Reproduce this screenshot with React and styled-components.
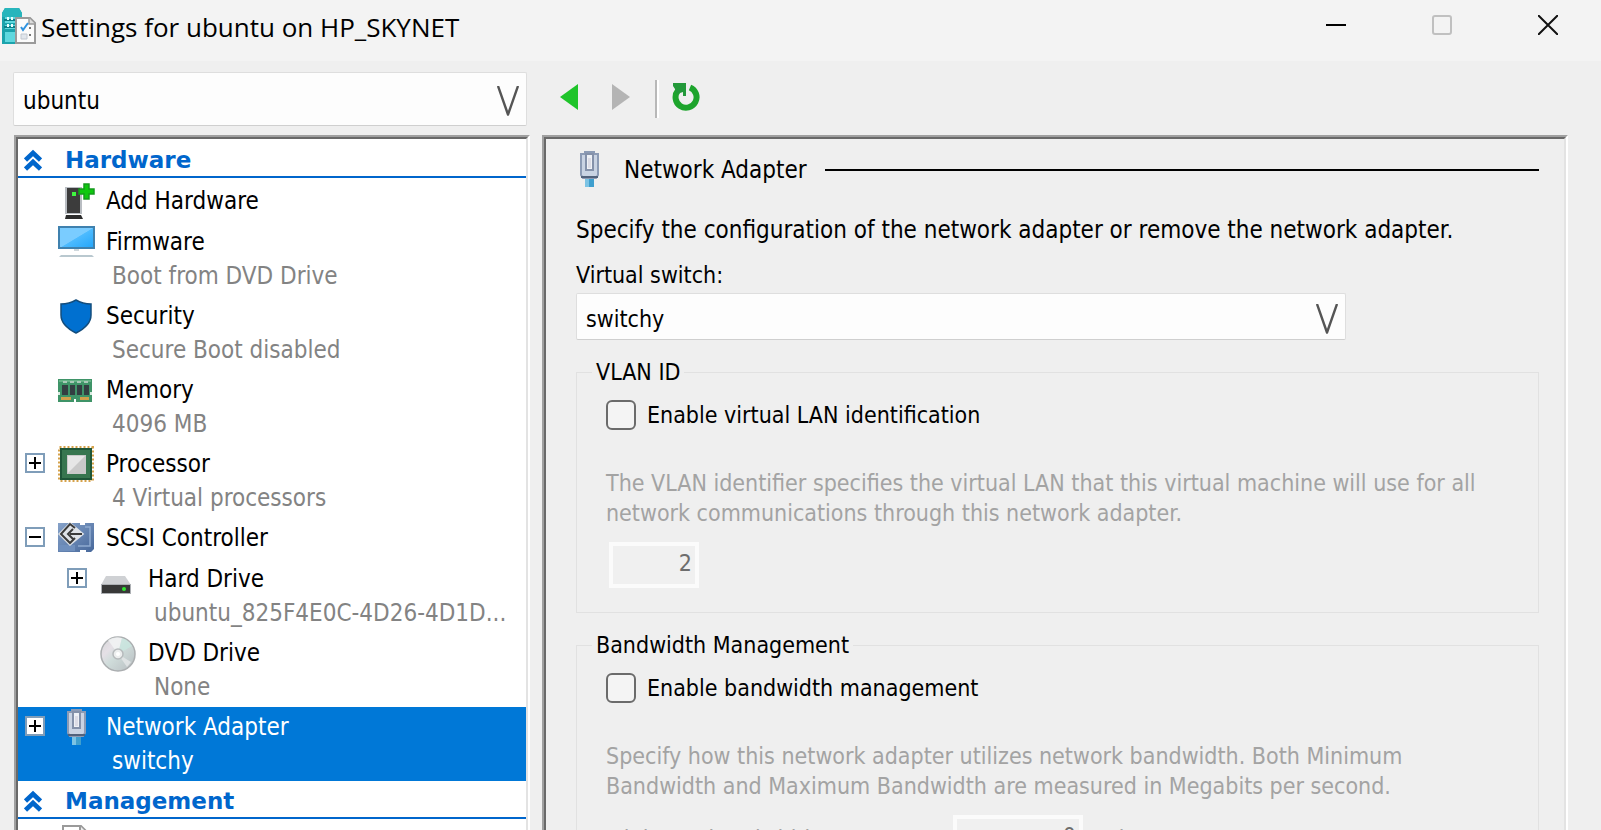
import React from "react";
import styled, { createGlobalStyle } from "styled-components";

const GlobalStyle = createGlobalStyle`
  *, *::before, *::after { box-sizing: border-box; }
  body { margin: 0; background: #efefef; }
  button, input, select { font: inherit; color: inherit; margin: 0; }
`;

const Window = styled.div`
  height: 100vh;
  display: flex;
  flex-direction: column;
  overflow: hidden;
  background: #efefef;
  color: #000;
  font: 24px/30px "DejaVu Sans Condensed", Tahoma, "Noto Sans", sans-serif;
`;

const TitleBar = styled.header`
  flex: none;
  display: flex;
  align-items: flex-start;
  height: 61px;
  background: #f3f3f3;
`;

const TitleIcon = styled.svg`
  flex: none;
  width: 36px;
  height: 38px;
  margin: 7px 4px 0 1px;
`;

const Title = styled.h1`
  flex: 1;
  margin: 0;
  padding-top: 7px;
  font: 400 26px/40px "Open Sans", "Segoe UI", sans-serif;
  white-space: nowrap;
`;

const CaptionButton = styled.button`
  display: flex;
  align-items: center;
  justify-content: center;
  width: 106px;
  height: 50px;
  padding: 0;
  border: 0;
  background: none;
`;

const ToolBar = styled.div`
  flex: none;
  display: flex;
  align-items: flex-start;
  padding: 11px 13px 9px;
`;

const SelectBox = styled.div`
  position: relative;
  width: ${(p) => p.$width};
  height: ${(p) => p.$height};
  font-size: ${(p) => p.$size};

  select {
    width: 100%;
    height: 100%;
    padding: 4px 40px 0 9px;
    border: 1px solid #dedede;
    border-bottom-color: #cfcfcf;
    border-radius: 2px;
    background: #fdfdfd;
    appearance: none;
  }

  svg {
    position: absolute;
    right: 8px;
    top: 50%;
    margin-top: -13px;
    pointer-events: none;
  }
`;

const ToolGroup = styled.div`
  display: flex;
  align-items: center;
  height: 50px;
  padding-left: 16px;
`;

const ToolButton = styled.button`
  display: flex;
  justify-content: center;
  align-items: center;
  width: ${(p) => p.$width || "52px"};
  height: 36px;
  padding: 0;
  border: 0;
  background: none;
`;

const Separator = styled.div`
  width: 4px;
  height: 38px;
  margin: 4px 13px 0 8px;
  border-left: 2px solid #b8b8b8;
  border-right: 2px solid #fff;
`;

const Body = styled.main`
  flex: 1;
  min-height: 0;
  display: flex;
  gap: 12px;
  padding: 0 33px 0 14px;
`;

const Sunken = styled.section`
  min-width: 0;
  overflow: hidden;
  border: solid;
  border-width: 2px 2px 0 2px;
  border-color: #a0a0a0 #fff #a0a0a0 #a0a0a0;
  background: ${(p) => p.$bg};
`;

const SunkenInner = styled.div`
  min-height: 100%;
  padding-top: 1px;
  border: solid;
  border-width: 2px 2px 0 2px;
  border-color: #696969 #e3e3e3 #696969 #696969;
`;

const Sidebar = styled(Sunken)`
  flex: 0 0 516px;
`;

const Detail = styled(Sunken)`
  flex: 1;
`;

const GroupHeader = styled.h2`
  display: flex;
  align-items: center;
  height: 38px;
  margin: 0 0 3px;
  padding: 4px 0 0 6px;
  border-bottom: 2px solid #0066cc;
  color: #0066cc;
  font: 700 23px/32px "DejaVu Sans", Verdana, sans-serif;

  svg { margin-right: 23px; }
`;

const Tree = styled.ul`
  list-style: none;
  margin: 0;
  padding: 0;
`;

const Node = styled.li`
  display: flex;
  align-items: flex-start;
  height: ${(p) => (p.$tall ? "74px" : "41px")};
  padding-left: ${(p) => (p.$child ? "49px" : "7px")};
  background: ${(p) => (p.$selected ? "#0078d7" : "transparent")};
  color: ${(p) => (p.$selected ? "#fff" : "#000")};
`;

const ExpanderSlot = styled.div`
  flex: none;
  width: 33px;
  padding-top: 9px;
`;

const Expander = styled.button`
  display: block;
  width: 20px;
  height: 20px;
  padding: 0;
  border: 2px solid #7f9db9;
  background: #fff;

  svg { display: block; }
`;

const NodeIcon = styled.div`
  flex: none;
  width: 48px;
  height: 40px;
  padding-top: 2px;
`;

const NodeText = styled.div`
  min-width: 0;
  padding-top: 5px;
`;

const NodeDetail = styled.div`
  margin-top: 4px;
  padding-left: 6px;
  color: ${(p) => (p.$selected ? "#fff" : "#838383")};
  white-space: nowrap;
`;

const DetailContent = styled.div`
  padding: 11px 25px 0 30px;
`;

const DetailHeading = styled.h2`
  display: flex;
  align-items: center;
  margin: 0 0 27px;
  font-size: 24px;
  font-weight: 400;

  svg { margin: 0 25px 0 4px; }

  &::after {
    content: "";
    flex: 1;
    height: 2px;
    margin-left: 18px;
    background: #000;
  }
`;

const Paragraph = styled.p`
  margin: 0 0 15px;
`;

const FieldLabel = styled.label`
  display: block;
  margin-bottom: 3px;
  font-size: 23px;
`;

const GroupBox = styled.fieldset`
  min-width: 0;
  margin: 17px 0 0;
  padding: 13px 30px 24px 29px;
  border: 1px solid #e1e1e1;
  font-size: 23px;

  legend {
    margin-left: -14px;
    padding: 0 4px;
  }
`;

const CheckLabel = styled.label`
  display: flex;
  align-items: center;
  gap: 11px;
  width: fit-content;

  input {
    width: 30px;
    height: 30px;
    border: 2px solid #6b6b6b;
    border-radius: 6px;
    background: #f4f4f4;
    appearance: none;
  }
`;

const Hint = styled.p`
  margin: 38px 0 14px;
  color: #a3a3a3;
`;

const NumberInput = styled.input`
  width: ${(p) => p.$width};
  height: 46px;
  margin-left: 3px;
  padding: 0 3px 4px;
  border: 4px solid #fbfbfb;
  background: #f0f0f0;
  color: #6d6d6d;
  text-align: right;

  &:disabled { opacity: 1; }
`;

const LimitRow = styled.div`
  display: flex;
  align-items: center;
  gap: 18px;
  color: #a3a3a3;

  label { width: 326px; padding-top: 2px; }
  span { padding-top: 2px; }
`;

const Chevron = () => (
  <svg width="22" height="31" viewBox="0 0 22 31" fill="none" stroke="#555" strokeWidth="2.4">
    <path d="M1 0L11 28.500L21 0" strokeLinejoin="round" />
  </svg>
);

const DoubleUp = () => (
  <svg width="18" height="22" viewBox="0 0 18 22" fill="none" stroke="#0066cc" strokeWidth="4.600">
    <path d="M1.500 11L9 4L16.500 11M1.500 20L9 13L16.500 20" />
  </svg>
);

const SettingsIcon = () => (
  <TitleIcon viewBox="0 0 36 38">
    <path d="M1 6L4 1H18L21 6V37H1Z" fill="#1ba3ac" />
    <path d="M1 6L4 1H18L21 6V10H1Z" fill="#27b5bc" />
    <path d="M4 10H20V16H4ZM4 18H20V22H4ZM4 25H20V35H4Z" fill="#5fd8df" />
    <path d="M3 13H18M3 20H18" stroke="#0c7f88" strokeWidth="2" />
    <path d="M7 10V13M11 10V13M7 17V20M11 17V20" stroke="#e8ffff" strokeWidth="2" />
    <path d="M15 11H29L34 16V36H15Z" fill="#fbfbfb" stroke="#9a9a9a" strokeWidth="2" />
    <path d="M28 11V17H34" fill="#ddd" stroke="#9a9a9a" strokeWidth="1.500" />
    <path d="M20 20L22 23L27 16" stroke="#2f93e0" strokeWidth="2" fill="none" />
    <path d="M28 21H30M28 28H30" stroke="#777" strokeWidth="2" />
    <path d="M20 27H26V32H20Z" fill="#e1e6ec" stroke="#c2c8d0" />
  </TitleIcon>
);

const AddHardwareIcon = () => (
  <svg width="37" height="37" viewBox="0 0 37 37">
    <path d="M7 4H24V31H7Z" fill="#b9bdc2" />
    <path d="M9 5H22V30H9Z" fill="#3c3c3c" />
    <path d="M8 32H23L25 36H7Z" fill="#2d2d2d" />
    <path d="M14 9H18V13H14Z" fill="#3ff53f" />
    <path d="M26 1H31V6H36V11H31V16H26V11H21V6H26Z" fill="#0fc80f" stroke="#149b1c" strokeWidth="1.500" />
  </svg>
);

const FirmwareIcon = () => (
  <svg width="37" height="37" viewBox="0 0 37 37">
    <defs>
      <linearGradient id="screen" x1="0" y1="0" x2="1" y2="1">
        <stop offset="0.5" stopColor="#7accff" />
        <stop offset="0.52" stopColor="#4dbbff" />
        <stop offset="1" stopColor="#22a5fa" />
      </linearGradient>
    </defs>
    <path d="M1 3H36V24H1Z" fill="url(#screen)" stroke="#3f81ae" strokeWidth="2" />
    <path d="M16 25H21V27H16Z" fill="#cfd8dd" />
    <path d="M3 31H34L36 33H1Z" fill="#b9c8cf" />
  </svg>
);

const SecurityIcon = () => (
  <svg width="37" height="37" viewBox="0 0 37 37">
    <path d="M18 2C23 5 28 6 33 6V17C33 25 26 31 18 35C10 31 3 25 3 17V6C8 6 13 5 18 2Z" fill="#0070d0" stroke="#134d7d" strokeWidth="1.500" />
  </svg>
);

const MemoryIcon = () => (
  <svg width="37" height="37" viewBox="0 0 37 37">
    <path d="M0 7H34V30H18V27H16V30H0Z" fill="#3f9468" />
    <path d="M1 8H33V10H1Z" fill="#65b286" />
    <path d="M4 13H10V23H4ZM12 13H17V23H12ZM19 13H24V23H19ZM26 13H31V23H26Z" fill="#333e41" />
    <path d="M5 10H9M12 10H16M19 10H23M26 10H30" stroke="#a9c9b8" strokeWidth="2" />
    <path d="M3 26.500H13M22 26.500H31" stroke="#d1a04b" strokeWidth="3" />
    <path d="M0 20H2V23H0ZM32 20H34V23H32Z" fill="#d8ebe0" />
  </svg>
);

const ProcessorIcon = () => (
  <svg width="37" height="37" viewBox="0 0 37 37">
    <rect x="1.500" y="1.500" width="33" height="33" fill="none" stroke="#d5a24a" strokeWidth="3" strokeDasharray="2 2" />
    <rect x="3" y="3" width="30" height="30" fill="#37764f" stroke="#1e5638" strokeWidth="2" />
    <rect x="9" y="9" width="19" height="19" fill="#c9c9c9" />
    <path d="M10 10H27L10 27Z" fill="#e6e6e6" />
  </svg>
);

const ScsiIcon = () => (
  <svg width="37" height="37" viewBox="0 0 37 37">
    <defs>
      <linearGradient id="card" x1="0" y1="0" x2="1" y2="1">
        <stop offset="0" stopColor="#86a2c9" />
        <stop offset="1" stopColor="#47689b" />
      </linearGradient>
    </defs>
    <path d="M0 3H22V5H27V3H36V29L33 32H28V30H22V32H0Z" fill="url(#card)" />
    <path d="M27 7H32V26H20" fill="none" stroke="#8fabd0" strokeWidth="1.500" />
    <path d="M1 25H17V31H1Z" fill="#6f8fbd" />
    <path d="M12 4L24 14L12 24L2 14Z" fill="#dfe3e8" stroke="#dfe3e8" strokeWidth="3" />
    <path d="M17 8L12 4L3 14L12 23L17 18M24 14H12M15 9L10 14L15 19" fill="none" stroke="#3b3b3b" strokeWidth="2" />
  </svg>
);

const HardDriveIcon = () => (
  <svg width="37" height="37" viewBox="0 0 37 37">
    <path d="M6 15H25L31 24H1Z" fill="#cfd1d4" />
    <path d="M1 23H31V33H1Z" fill="#adb0b4" />
    <path d="M2 24H30V32H2Z" fill="#383838" />
    <circle cx="24" cy="28" r="2" fill="#2fe82f" />
  </svg>
);

const DvdIcon = () => (
  <svg width="37" height="37" viewBox="0 0 37 37">
    <defs>
      <linearGradient id="disc" x1="0" y1="0" x2="1" y2="1">
        <stop offset="0" stopColor="#d4d5d6" />
        <stop offset="0.3" stopColor="#e5e0e6" />
        <stop offset="0.5" stopColor="#cfdcda" />
        <stop offset="1" stopColor="#b7bcc0" />
      </linearGradient>
    </defs>
    <circle cx="18" cy="19" r="17" fill="url(#disc)" stroke="#abaeb0" strokeWidth="1.500" />
    <path d="M18 19L8 5A17 17 0 0 1 22 3Z" fill="#f2f5f5" opacity="0.8" />
    <path d="M18 19L22 3A17 17 0 0 1 32 11Z" fill="#c8e6df" opacity="0.8" />
    <path d="M18 19L31 27L27 32Z" fill="#e5e7e8" opacity="0.8" />
    <circle cx="18" cy="19" r="5" fill="#eceeee" stroke="#b6babc" strokeWidth="1.500" />
    <circle cx="18" cy="19" r="2" fill="#fff" />
  </svg>
);

const PlugShape = () => (
  <>
    <path d="M5 28H14V36H5Z" fill="#3f9fce" />
    <path d="M5 28H9V36H5Z" fill="#7cc3e4" />
    <path d="M1 3H5V1H14V3H18V24L16 27H3L1 24Z" fill="#c9d3e3" stroke="#8c9bb5" strokeWidth="2" />
    <path d="M6 3H13V19H6Z" fill="#eef1f6" stroke="#8491aa" strokeWidth="2" />
    <path d="M8 7H11V17H8Z" fill="#dcdce6" />
    <path d="M1 26H18" stroke="#52627c" strokeWidth="2" />
  </>
);

const PlugIcon = () => (
  <svg width="19" height="37" viewBox="0 0 19 37"><PlugShape /></svg>
);

const TreePlugIcon = () => (
  <svg width="37" height="37" viewBox="-9 0 37 37"><PlugShape /></svg>
);

const PageIcon = () => (
  <svg width="37" height="37" viewBox="0 0 37 37">
    <path d="M5 2H23L30 9V36H5Z" fill="#fff" stroke="#9a9a9a" strokeWidth="2" />
    <path d="M22 2V10H30" fill="#eee" stroke="#9a9a9a" strokeWidth="2" />
  </svg>
);

const hardware = [
  { name: "Add Hardware", icon: AddHardwareIcon },
  { name: "Firmware", detail: "Boot from DVD Drive", icon: FirmwareIcon },
  { name: "Security", detail: "Secure Boot disabled", icon: SecurityIcon },
  { name: "Memory", detail: "4096 MB", icon: MemoryIcon },
  { name: "Processor", detail: "4 Virtual processors", icon: ProcessorIcon, toggle: "+" },
  { name: "SCSI Controller", icon: ScsiIcon, toggle: "-" },
  { name: "Hard Drive", detail: "ubuntu_825F4E0C-4D26-4D1D...", icon: HardDriveIcon, toggle: "+", child: true },
  { name: "DVD Drive", detail: "None", icon: DvdIcon, child: true },
  { name: "Network Adapter", detail: "switchy", icon: TreePlugIcon, toggle: "+", selected: true },
];

function TreeNode({ name, detail, icon: Icon, toggle, child, selected }) {
  return (
    <Node $tall={Boolean(detail) || !name} $child={child} $selected={selected}>
      <ExpanderSlot>
        {toggle && (
          <Expander aria-label={`${toggle === "+" ? "Expand" : "Collapse"} ${name}`}>
            <svg width="16" height="16" viewBox="0 0 16 16" stroke="#000" strokeWidth="2">
              <path d={toggle === "+" ? "M2 8H14M8 2V14" : "M2 8H14"} />
            </svg>
          </Expander>
        )}
      </ExpanderSlot>
      <NodeIcon><Icon /></NodeIcon>
      <NodeText>
        <div>{name}</div>
        {detail && <NodeDetail $selected={selected}>{detail}</NodeDetail>}
      </NodeText>
    </Node>
  );
}

export default function App() {
  return (
    <Window>
      <GlobalStyle />
      <TitleBar>
        <SettingsIcon />
        <Title>Settings for ubuntu on HP_SKYNET</Title>
        <CaptionButton aria-label="Minimize">
          <svg width="20" height="20" stroke="#000" strokeWidth="2"><path d="M0 10H20" /></svg>
        </CaptionButton>
        <CaptionButton aria-label="Maximize" disabled>
          <svg width="20" height="20" fill="none" stroke="#c0c0c0" strokeWidth="2">
            <rect x="1" y="1" width="18" height="18" rx="2" />
          </svg>
        </CaptionButton>
        <CaptionButton aria-label="Close">
          <svg width="20" height="20" stroke="#111" strokeWidth="2"><path d="M0 0L20 20M20 0L0 20" /></svg>
        </CaptionButton>
      </TitleBar>

      <ToolBar>
        <SelectBox $width="514px" $height="54px" $size="24px">
          <select aria-label="Virtual machine" defaultValue="ubuntu"><option>ubuntu</option></select>
          <Chevron />
        </SelectBox>
        <ToolGroup>
          <ToolButton aria-label="Back">
            <svg width="18" height="26"><path d="M0 13L18 0V26Z" fill="#1fc42a" /></svg>
          </ToolButton>
          <ToolButton aria-label="Forward" disabled>
            <svg width="18" height="26"><path d="M18 13L0 0V26Z" fill="#b4b4b4" /></svg>
          </ToolButton>
          <Separator />
          <ToolButton aria-label="Refresh" $width="28px">
            <svg width="28" height="28" viewBox="0 0 28 28">
              <path d="M18 4.500A10.500 10.500 0 1 1 6 7.500" fill="none" stroke="#1da42c" strokeWidth="6" />
              <path d="M1 0H14V13L11 13V9L5 11L3 6L1 3Z" fill="#23993a" />
            </svg>
          </ToolButton>
        </ToolGroup>
      </ToolBar>

      <Body>
        <Sidebar $bg="#fff">
          <SunkenInner>
            <GroupHeader><DoubleUp />Hardware</GroupHeader>
            <Tree>
              {hardware.map((item) => <TreeNode key={item.name} {...item} />)}
            </Tree>
            <GroupHeader><DoubleUp />Management</GroupHeader>
            <Tree>
              <TreeNode icon={PageIcon} />
            </Tree>
          </SunkenInner>
        </Sidebar>

        <Detail $bg="#efefef">
          <SunkenInner>
            <DetailContent>
              <DetailHeading><PlugIcon />Network Adapter</DetailHeading>
              <Paragraph>Specify the configuration of the network adapter or remove the network adapter.</Paragraph>
              <FieldLabel htmlFor="virtual-switch">Virtual switch:</FieldLabel>
              <SelectBox $width="80%" $height="47px" $size="23px">
                <select id="virtual-switch" defaultValue="switchy"><option>switchy</option></select>
                <Chevron />
              </SelectBox>

              <GroupBox>
                <legend>VLAN ID</legend>
                <CheckLabel><input type="checkbox" />Enable virtual LAN identification</CheckLabel>
                <Hint>The VLAN identifier specifies the virtual LAN that this virtual machine will use for all network communications through this network adapter.</Hint>
                <NumberInput $width="90px" aria-label="VLAN identifier" defaultValue="2" disabled />
              </GroupBox>

              <GroupBox>
                <legend>Bandwidth Management</legend>
                <CheckLabel><input type="checkbox" />Enable bandwidth management</CheckLabel>
                <Hint>Specify how this network adapter utilizes network bandwidth. Both Minimum Bandwidth and Maximum Bandwidth are measured in Megabits per second.</Hint>
                <LimitRow>
                  <label htmlFor="min-bandwidth">Minimum bandwidth:</label>
                  <NumberInput $width="130px" id="min-bandwidth" defaultValue="0" disabled />
                  <span>Mbps</span>
                </LimitRow>
              </GroupBox>
            </DetailContent>
          </SunkenInner>
        </Detail>
      </Body>
    </Window>
  );
}
